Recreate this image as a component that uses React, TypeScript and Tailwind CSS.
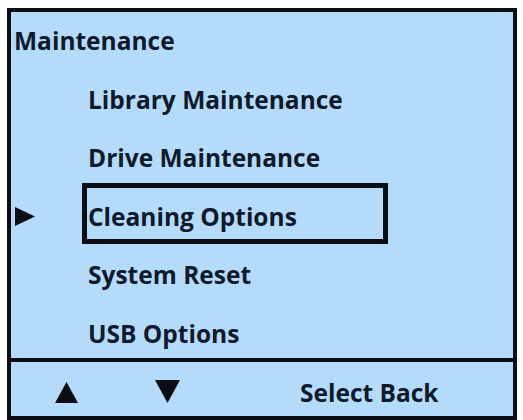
import React from "react";

const items = [
  "Library Maintenance",
  "Drive Maintenance",
  "Cleaning Options",
  "System Reset",
  "USB Options",
];

export default function App() {
  return (
    <div
      className="w-[523px] h-[420px] bg-white pt-[8px] pl-[7px] pr-[6px] overflow-hidden"
      style={{ fontFamily: "'Open Sans', Lato, sans-serif" }}
    >
      <div className="h-[412px] border-[4px] border-[#0a0d14] bg-[#b4dcfa] text-[#0e1a2c] flex flex-col">
        <div className="h-[346px] pt-[14px] flex flex-col gap-[29.5px] text-[24.5px] font-bold leading-[29px]">
          <div className="pl-[3px]">Maintenance</div>
          {items.map((t) => {
            const sel = t === "Cleaning Options";
            return (
              <div key={t} className="flex items-center">
                <div className="w-[77px] shrink-0 flex items-center">
                  {sel && (
                    <svg width="20" height="19" viewBox="0 0 20 19" className="ml-[4px]">
                      <polygon points="0,0 20,9.5 0,19" fill="#0a0d14" />
                    </svg>
                  )}
                </div>
                <div className="relative">
                  {sel && (
                    <span className="absolute left-[-6px] top-[-19px] w-[306px] h-[61px] border-[5px] border-[#0a0d14]" />
                  )}
                  <span className="relative">{t}</span>
                </div>
              </div>
            );
          })}
        </div>
        <div className="h-[4px] bg-[#0a0d14]" />
        <div className="flex-1 flex items-start pt-[16px] text-[24.5px] font-bold leading-[29px]">
          <svg width="23" height="21" viewBox="0 0 23 21" className="ml-[44px] mt-[4px]">
            <polygon points="11.5,0 23,21 0,21" fill="#0a0d14" />
          </svg>
          <svg width="25" height="23" viewBox="0 0 25 23" className="ml-[77px] mt-[2px]">
            <polygon points="0,0 25,0 12.5,23" fill="#0a0d14" />
          </svg>
          <div className="ml-[120px]">Select Back</div>
        </div>
      </div>
    </div>
  );
}
